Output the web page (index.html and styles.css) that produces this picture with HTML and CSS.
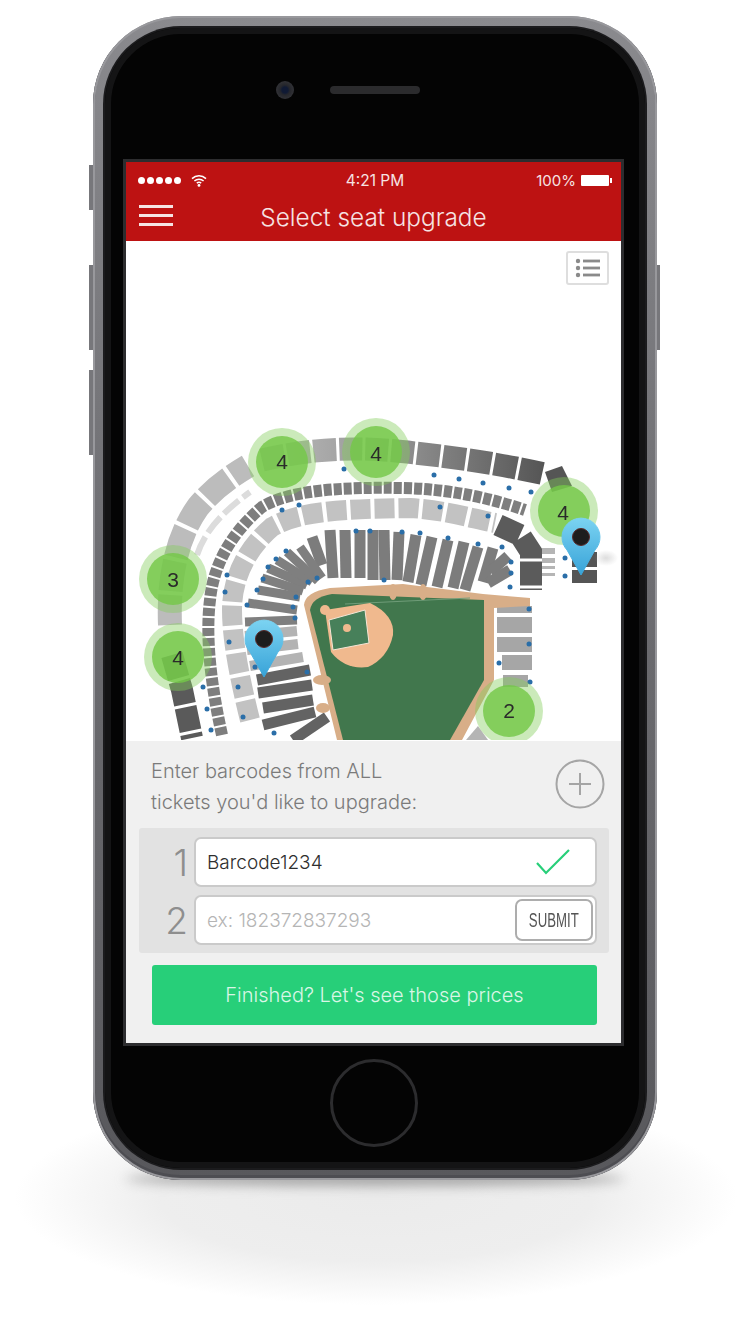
FILE: index.html
```html
<!DOCTYPE html>
<html lang="en">
<head>
    <meta charset="UTF-8">
    <title>Select seat upgrade</title>
    <link rel="stylesheet" href="styles.css">
</head>
<body>
    <div class="stage">
        <div class="floor-shadow"></div>
        <div class="floor-contact"></div>
        <div class="phone">
            <span class="side-btn side-mute"></span>
            <span class="side-btn side-up"></span>
            <span class="side-btn side-down"></span>
            <span class="side-btn side-power"></span>
            <div class="bezel">
                <div class="bezel-top">
                    <span class="camera"></span>
                    <span class="speaker"></span>
                </div>
                <div class="screen">
                    <header class="app-head">
                        <div class="status-bar">
                            <div class="status-left">
                                <span class="signal"><i></i><i></i><i></i><i></i><i></i></span>
                                <svg class="wifi" width="16" height="13" viewBox="0 0 16 13">
                                    <path d="M1 4.6C5 .8 11 .8 15 4.6" />
                                    <path d="M3.4 7C6 4.7 10 4.7 12.6 7" />
                                    <path d="M5.8 9.2C7 8.2 9 8.2 10.2 9.2" />
                                    <circle cx="8" cy="11.4" r="1.4" />
                                </svg>
                            </div>
                            <div class="status-time">4:21 PM</div>
                            <div class="status-right">
                                <span>100%</span>
                                <span class="battery"></span>
                            </div>
                        </div>
                        <div class="nav-bar">
                            <div class="burger"><i></i><i></i><i></i></div>
                            <h1>Select seat upgrade</h1>
                            <div></div>
                        </div>
                    </header>

                    <section class="map">
                        <div class="list-btn">
                            <svg width="26" height="20" viewBox="0 0 26 20">
                                <circle cx="3" cy="3" r="2.2" />
                                <circle cx="3" cy="10" r="2.2" />
                                <circle cx="3" cy="17" r="2.2" />
                                <rect x="8" y="1.6" width="17" height="2.8" />
                                <rect x="8" y="8.6" width="17" height="2.8" />
                                <rect x="8" y="15.6" width="17" height="2.8" />
                            </svg>
                        </div>
                        <svg class="stadium" width="495" height="499" viewBox="126 241 495 499">
                            <defs>
                                <linearGradient id="topRing" gradientUnits="userSpaceOnUse" x1="290" y1="0" x2="545" y2="0">
                                    <stop offset="0" stop-color="#b4b4b4" />
                                    <stop offset="0.5" stop-color="#8a8a8a" />
                                    <stop offset="1" stop-color="#555" />
                                </linearGradient>
                                <linearGradient id="pinFill" x1="0" y1="0" x2="0" y2="1">
                                    <stop offset="0" stop-color="#7bd3f2" />
                                    <stop offset="1" stop-color="#38a3d8" />
                                </linearGradient>
                                <radialGradient id="pinShade">
                                    <stop offset="0" stop-color="#aaa" stop-opacity=".4" />
                                    <stop offset="1" stop-color="#aaa" stop-opacity="0" />
                                </radialGradient>
                            </defs>

                            <!-- upper deck -->
                            <path class="ring ring-light" d="M170 625C168 575 178 535 198 507C212 490 228 478 248 466" />
                            <path class="ring ring-top" d="M262 460C330 444 380 449 415 453C460 458 500 464 545 474" />
                            <path class="ring ring-low" d="M172 655L182 690L192 738" />
                            <path class="ring ring-strip" d="M197 555C205 530 225 510 250 492" />
                            <polygon class="seat-dark" points="545,472 562,466 572,486 552,492" />

                            <!-- club level -->
                            <path class="ring ring-thin" d="M222 735C212 690 205 640 210 600C214 560 235 530 262 507C290 490 340 487 403 488C450 489 490 498 525 510" />
                            <path class="ring ring-mid" d="M250 720C240 680 232 640 232 610C232 580 245 550 272 527C300 510 350 509 410 508C445 510 470 518 495 523" />
                            <path class="ring ring-corner" d="M498 525L520 535L531 552L531 590" />

                            <!-- lower bowl fan -->
                            <g class="fan">
                                <line x1="312" y1="537" x2="322" y2="565" />
                                <line x1="330" y1="530" x2="333" y2="578" />
                                <line x1="345" y1="530" x2="346" y2="578" />
                                <line x1="360" y1="530" x2="360" y2="578" />
                                <line x1="373" y1="530" x2="373" y2="580" />
                                <line x1="384" y1="530" x2="385" y2="580" />
                                <line x1="399" y1="532" x2="397" y2="580" />
                                <line x1="416" y1="535" x2="408" y2="582" />
                                <line x1="432" y1="537" x2="421" y2="585" />
                                <line x1="448" y1="540" x2="437" y2="587" />
                                <line x1="464" y1="542" x2="453" y2="588" />
                                <line x1="478" y1="547" x2="465" y2="590" />
                                <line x1="493" y1="548" x2="483" y2="582" />
                                <line x1="508" y1="556" x2="490" y2="572" />
                                <line x1="510" y1="570" x2="488" y2="583" />
                            </g>
                            <g class="fan fan-left">
                                <line x1="268" y1="568" x2="307" y2="585" />
                                <line x1="277" y1="560" x2="312" y2="582" />
                                <line x1="287" y1="552" x2="318" y2="581" />
                                <line x1="300" y1="547" x2="322" y2="578" />
                                <line x1="262" y1="578" x2="303" y2="591" />
                                <line x1="258" y1="590" x2="300" y2="597" />
                                <line x1="248" y1="603" x2="297" y2="610" />
                                <line x1="245" y1="622" x2="297" y2="620" />
                            </g>
                            <g class="fan fan-pale">
                                <line x1="245" y1="636" x2="297" y2="631" />
                                <line x1="247" y1="650" x2="298" y2="644" />
                                <line x1="250" y1="666" x2="303" y2="657" />
                            </g>
                            <g class="fan fan-dark">
                                <line x1="257" y1="680" x2="310" y2="670" />
                                <line x1="258" y1="693" x2="312" y2="685" />
                                <line x1="263" y1="708" x2="313" y2="700" />
                                <line x1="263" y1="725" x2="315" y2="712" />
                                <line x1="293" y1="740" x2="327" y2="717" />
                            </g>

                            <!-- right side blocks -->
                            <rect class="seat-mid" x="497" y="606" width="35" height="7" />
                            <rect class="seat-mid" x="497" y="617" width="35" height="16" />
                            <rect class="seat-mid" x="497" y="637" width="35" height="15" />
                            <rect class="seat-mid" x="502" y="655" width="30" height="15" />
                            <rect class="seat-mid" x="503" y="675" width="25" height="12" />
                            <rect class="seat-pale" x="542" y="548" width="13" height="6" />
                            <rect class="seat-pale" x="542" y="558" width="13" height="5" />
                            <rect class="seat-pale" x="542" y="566" width="13" height="3" />
                            <rect class="seat-pale" x="542" y="573" width="13" height="3" />
                            <rect class="seat-block" x="572" y="552" width="25" height="15" />
                            <rect class="seat-block" x="572" y="570" width="25" height="13" />

                            <!-- field -->
                            <path class="dirt" d="M304 605Q305 592 330 588L403 584L483 594L530 598L530 606L494 608L494 680L462 740L337 740Z" />
                            <path class="grass" d="M310 610Q312 597 332 594L484 600L484 680L450 740L343 740Z" />
                            <path class="warning-line" d="M345 604L470 598" />
                            <polygon class="seat-pale" points="478,726 488,740 466,740" />
                            <ellipse class="dirt" cx="322" cy="680" rx="9" ry="5" />
                            <ellipse class="dirt" cx="323" cy="708" rx="7" ry="5" />
                            <ellipse class="dirt" cx="393" cy="592" rx="4" ry="8" />
                            <ellipse class="dirt" cx="423" cy="592" rx="4" ry="8" />
                            <path class="infield" d="M325 610L370 603Q395 615 393 635Q388 658 368 667Q345 670 331 652Z" />
                            <polygon class="diamond" points="329,620 365,610 369,643 333,650" />
                            <circle class="infield" cx="325" cy="610" r="5" />
                            <circle class="infield" cx="347" cy="628" r="4" />

                            <g class="seat-dots">
                                <circle cx="344" cy="469" r="2.5" /><circle cx="282" cy="510" r="2.5" /><circle cx="299" cy="505" r="2.5" />
                                <circle cx="356" cy="531" r="2.5" /><circle cx="370" cy="531" r="2.5" /><circle cx="286" cy="551" r="2.5" />
                                <circle cx="276" cy="559" r="2.5" /><circle cx="268" cy="567" r="2.5" /><circle cx="227" cy="575" r="2.5" />
                                <circle cx="263" cy="579" r="2.5" /><circle cx="257" cy="590" r="2.5" /><circle cx="225" cy="592" r="2.5" />
                                <circle cx="308" cy="582" r="2.5" /><circle cx="317" cy="578" r="2.5" /><circle cx="296" cy="597" r="2.5" />
                                <circle cx="293" cy="607" r="2.5" /><circle cx="247" cy="605" r="2.5" /><circle cx="295" cy="618" r="2.5" />
                                <circle cx="229" cy="642" r="2.5" /><circle cx="255" cy="667" r="2.5" /><circle cx="307" cy="672" r="2.5" />
                                <circle cx="203" cy="687" r="2.5" /><circle cx="238" cy="687" r="2.5" /><circle cx="207" cy="709" r="2.5" />
                                <circle cx="243" cy="717" r="2.5" /><circle cx="211" cy="730" r="2.5" /><circle cx="274" cy="733" r="2.5" />
                                <circle cx="434" cy="475" r="2.5" /><circle cx="459" cy="479" r="2.5" /><circle cx="483" cy="483" r="2.5" />
                                <circle cx="509" cy="488" r="2.5" /><circle cx="531" cy="492" r="2.5" /><circle cx="440" cy="507" r="2.5" />
                                <circle cx="488" cy="516" r="2.5" /><circle cx="402" cy="532" r="2.5" /><circle cx="420" cy="533" r="2.5" />
                                <circle cx="448" cy="538" r="2.5" /><circle cx="478" cy="544" r="2.5" /><circle cx="502" cy="547" r="2.5" />
                                <circle cx="511" cy="562" r="2.5" /><circle cx="511" cy="573" r="2.5" /><circle cx="510" cy="587" r="2.5" />
                                <circle cx="384" cy="580" r="2.5" /><circle cx="529" cy="609" r="2.5" /><circle cx="529" cy="644" r="2.5" />
                                <circle cx="499" cy="663" r="2.5" /><circle cx="530" cy="682" r="2.5" /><circle cx="565" cy="558" r="2.5" />
                                <circle cx="565" cy="576" r="2.5" />
                            </g>

                            <!-- ticket clusters -->
                            <g class="cluster"><circle class="halo" cx="282" cy="462" r="34" /><circle class="core" cx="282" cy="462" r="26" /><text x="282" y="469">4</text></g>
                            <g class="cluster"><circle class="halo" cx="376" cy="452" r="34" /><circle class="core" cx="376" cy="452" r="26" /><text x="376" y="461">4</text></g>
                            <g class="cluster"><circle class="halo" cx="564" cy="511" r="34" /><circle class="core" cx="564" cy="511" r="26" /><text x="563" y="520">4</text></g>
                            <g class="cluster"><circle class="halo" cx="173" cy="579" r="34" /><circle class="core" cx="173" cy="579" r="26" /><text x="173" y="587">3</text></g>
                            <g class="cluster"><circle class="halo" cx="178" cy="657" r="34" /><circle class="core" cx="178" cy="657" r="26" /><text x="178" y="665">4</text></g>
                            <g class="cluster"><circle class="halo" cx="509" cy="711" r="34" /><circle class="core" cx="509" cy="711" r="26" /><text x="509" y="718">2</text></g>

                            <!-- selected seats -->
                            <path class="pin" d="M264 677L250 652A19 19 0 1 1 278 652Z" />
                            <circle class="pin-eye" cx="264" cy="639" r="8.5" />
                            <ellipse cx="606" cy="558" rx="12" ry="8" fill="url(#pinShade)" />
                            <path class="pin" d="M581 575L567 550A19 19 0 1 1 595 550Z" />
                            <circle class="pin-eye" cx="581" cy="537" r="8.5" />
                        </svg>
                    </section>

                    <section class="barcode-panel">
                        <div class="panel-head">
                            <p>Enter barcodes from ALL<br>tickets you'd like to upgrade:</p>
                            <svg class="add-btn" width="50" height="50" viewBox="0 0 50 50">
                                <circle cx="25" cy="25" r="23.5" />
                                <path d="M25 14V36M14 25H36" />
                            </svg>
                        </div>
                        <div class="code-rows">
                            <div class="code-row">
                                <span class="code-num">1</span>
                                <div class="code-field">
                                    <span class="code-value">Barcode1234</span>
                                    <svg class="check" width="36" height="28" viewBox="0 0 36 28">
                                        <path d="M2 15L11 25L34 2" />
                                    </svg>
                                </div>
                            </div>
                            <div class="code-row">
                                <span class="code-num">2</span>
                                <div class="code-field">
                                    <span class="code-hint">ex: 182372837293</span>
                                    <span class="submit-btn"><span class="submit-label">SUBMIT</span></span>
                                </div>
                            </div>
                        </div>
                        <div class="finish-btn">Finished? Let's see those prices</div>
                    </section>
                </div>
                <div class="bezel-bottom">
                    <span class="home-btn"></span>
                </div>
            </div>
        </div>
    </div>
</body>
</html>
```

FILE: styles.css
```css
html, body {
    margin: 0;
    padding: 0;
    background-color: #fff;
    height: 1319px;
    overflow: hidden;
}
body {
    font-family: 'Inter', 'Liberation Sans', Arial, sans-serif;
    color: #333;
}
.stage {
    position: relative;
    width: 747px;
    height: 1319px;
    padding: 16px 0 0 93px;
    box-sizing: border-box;
}

/* floor shadows */
.floor-shadow {
    position: absolute;
    left: 15px;
    top: 1090px;
    width: 722px;
    height: 215px;
    background: radial-gradient(closest-side, #ebebeb 0%, #eeeeee 60%, rgba(244,244,244,0) 100%);
}
.floor-contact {
    position: absolute;
    left: 125px;
    top: 1172px;
    width: 500px;
    height: 14px;
    border-radius: 50%;
    background: #a3a3a3;
    filter: blur(6px);
}

/* phone body */
.phone {
    position: relative;
    width: 564px;
    height: 1164px;
    padding: 12px;
    box-sizing: border-box;
    border-radius: 88px;
    background: linear-gradient(#8a8a8e, #6c6c70 50%, #58585c);
    box-shadow: inset 0 0 0 2px #98989c, inset 0 -3px 0 2px #4d4d52;
}
.side-btn {
    position: absolute;
    width: 4px;
    background: #77777b;
}
.side-mute { left: -4px; top: 149px; height: 45px; }
.side-up { left: -4px; top: 249px; height: 85px; }
.side-down { left: -4px; top: 354px; height: 85px; }
.side-power { right: -3px; top: 249px; width: 3px; height: 85px; }
.bezel {
    display: flex;
    flex-direction: column;
    height: 100%;
    border-radius: 76px;
    background-color: #040404;
    box-shadow: 0 0 0 2px #1b1b1d, inset 0 0 0 6px #141415;
}
.bezel-top {
    display: flex;
    align-items: center;
    gap: 36px;
    height: 131px;
    padding: 0 0 7px 171px;
    box-sizing: border-box;
    flex-shrink: 0;
}
.camera {
    width: 18px;
    height: 18px;
    border-radius: 50%;
    background: radial-gradient(circle at 50% 50%, #101a34 0 3px, #26272c 5px, #3c3c40 100%);
}
.speaker {
    width: 90px;
    height: 8px;
    border-radius: 4px;
    background-color: #2b2b2d;
}
.bezel-bottom {
    display: flex;
    align-items: center;
    justify-content: center;
    flex: 1;
    padding: 0 3px 8px 0;
}
.home-btn {
    width: 82px;
    height: 82px;
    border: 3px solid #2c2c2e;
    border-radius: 50%;
}

/* screen */
.screen {
    display: flex;
    flex-direction: column;
    width: 501px;
    height: 887px;
    margin-left: 18px;
    box-sizing: border-box;
    border: 3px solid #2d2d2f;
    background-color: #fff;
    flex-shrink: 0;
}
.app-head {
    background-color: #bd1212;
    color: #f6e3e3;
}
.status-bar {
    display: grid;
    grid-template-columns: 1fr auto 1fr;
    align-items: center;
    height: 36px;
    padding: 0 9px 0 12px;
    font-size: 15px;
    font-weight: 400;
}
.status-time {
    font-size: 15.5px;
}
.status-left, .status-right {
    display: flex;
    align-items: center;
}
.status-right {
    justify-content: flex-end;
    gap: 5px;
}
.signal {
    display: flex;
    gap: 2px;
    margin-right: 10px;
}
.signal i {
    width: 7px;
    height: 7px;
    border-radius: 50%;
    background-color: #fff;
}
.wifi path {
    fill: none;
    stroke: #fff;
    stroke-width: 1.5;
}
.wifi circle {
    fill: #fff;
}
.battery {
    position: relative;
    width: 28px;
    height: 11px;
    margin-right: 3px;
    background-color: #fff;
    border-radius: 1px;
}
.battery::after {
    content: "";
    position: absolute;
    right: -3px;
    top: 3px;
    width: 2px;
    height: 5px;
    background-color: #fff;
}
.nav-bar {
    display: grid;
    grid-template-columns: 1fr auto 1fr;
    align-items: center;
    height: 43px;
    padding: 0 13px;
}
.nav-bar h1 {
    margin: 0 0 5px;
    font-size: 24.4px;
    font-weight: 300;
}
.burger {
    display: flex;
    flex-direction: column;
    gap: 6.5px;
    width: 34px;
    margin-bottom: 8px;
}
.burger i {
    height: 2.5px;
    background-color: #f6e3e3;
}

/* map */
.map {
    position: relative;
    flex: 1;
    overflow: hidden;
}
.list-btn {
    position: absolute;
    top: 10px;
    right: 12px;
    display: flex;
    align-items: center;
    justify-content: center;
    width: 39px;
    height: 30px;
    border: 2px solid #dedede;
    border-radius: 3px;
}
.list-btn svg {
    fill: #8a8a8a;
}
.stadium {
    display: block;
    filter: blur(.5px);
}
.ring {
    fill: none;
}
.ring-light { stroke: #bcbcbc; stroke-width: 24; stroke-dasharray: 30 4; }
.ring-top { stroke: url(#topRing); stroke-width: 23; stroke-dasharray: 23 3; }
.ring-low { stroke: #5a5a5a; stroke-width: 22; stroke-dasharray: 24 3; }
.ring-strip { stroke: #dcdcdc; stroke-width: 6; stroke-dasharray: 20 5; }
.ring-thin { stroke: #7e7e7e; stroke-width: 12; stroke-dasharray: 8 2; }
.ring-mid { stroke: #c2c2c2; stroke-width: 20; stroke-dasharray: 20 4; }
.ring-corner { stroke: #5b5b5b; stroke-width: 22; stroke-dasharray: 24 3; }
.fan line {
    stroke: #7c7c7c;
    stroke-width: 11;
}
.fan-left line { stroke: #7f7f7f; stroke-width: 9; }
.fan-pale line { stroke: #b3b3b3; stroke-width: 10; }
.fan-dark line { stroke: #636363; stroke-width: 11; }
.seat-dark, .seat-block { fill: #555; }
.seat-mid { fill: #a6a6a6; }
.seat-pale { fill: #b5b5b5; }
.dirt { fill: #d8ae88; }
.grass { fill: #41774d; }
.warning-line {
    fill: none;
    stroke: #6f9c78;
    stroke-width: 1;
}
.infield { fill: #f0b98e; }
.diamond {
    fill: #47805a;
    stroke: #f5e6d6;
    stroke-width: 1;
}
.seat-dots { fill: #2a6ea8; }
.cluster text {
    fill: #2a2a2a;
    font-family: 'Liberation Sans', Arial, sans-serif;
    font-size: 21px;
    text-anchor: middle;
}
.halo { fill: rgba(130, 205, 90, .42); }
.core { fill: rgba(116, 200, 72, .82); }
.pin { fill: url(#pinFill); stroke: url(#pinFill); stroke-width: 1; stroke-linejoin: round; }
.pin-eye { fill: #1d1d1d; stroke: #5b2a2a; stroke-width: 1; }

/* barcode panel */
.barcode-panel {
    height: 302px;
    box-sizing: border-box;
    padding: 15px 12px 0 13px;
    background-color: #f0f0f0;
    flex-shrink: 0;
}
.panel-head {
    display: flex;
    justify-content: space-between;
    align-items: flex-start;
    height: 72px;
    padding: 0 4px 0 12px;
}
.panel-head p {
    margin: 0;
    font-size: 20px;
    font-weight: 300;
    line-height: 31px;
    color: #7b7b7b;
}
.add-btn {
    margin-top: 3px;
}
.add-btn circle, .add-btn path {
    fill: none;
    stroke: #a5a5a5;
    stroke-width: 2;
}
.code-rows {
    display: flex;
    flex-direction: column;
    gap: 8px;
    height: 125px;
    box-sizing: border-box;
    padding: 9px 12px 0 0;
    border-radius: 3px;
    background-color: #e2e2e2;
}
.code-row {
    display: flex;
    align-items: center;
    height: 50px;
}
.code-num {
    width: 55px;
    padding-right: 6px;
    box-sizing: border-box;
    text-align: right;
    font-size: 37px;
    font-weight: 300;
    color: #8e8e8e;
}
.code-field {
    display: flex;
    align-items: center;
    justify-content: space-between;
    flex: 1;
    height: 100%;
    box-sizing: border-box;
    padding: 0 2px 0 11px;
    border: 2px solid #cacaca;
    border-radius: 7px;
    background-color: #fff;
}
.code-value {
    font-size: 19px;
    font-weight: 300;
    color: #2e2e2e;
}
.code-hint {
    font-size: 19px;
    font-weight: 300;
    color: #b5b5b5;
}
.check {
    margin-right: 22px;
}
.check path {
    fill: none;
    stroke: #27cf79;
    stroke-width: 2.2;
}
.submit-btn {
    display: flex;
    align-items: center;
    justify-content: center;
    width: 78px;
    height: 42px;
    box-sizing: border-box;
    border: 2px solid #adadad;
    border-radius: 7px;
    font-family: 'Liberation Sans', Arial, sans-serif;
    font-size: 20px;
    color: #555;
}
.submit-label {
    transform: scaleX(.66);
}
.finish-btn {
    display: flex;
    align-items: center;
    justify-content: center;
    height: 60px;
    margin: 12px 12px 0 13px;
    border-radius: 3px;
    background-color: #27cf79;
    font-size: 20px;
    font-weight: 300;
    color: #d9f6e6;
}
```
